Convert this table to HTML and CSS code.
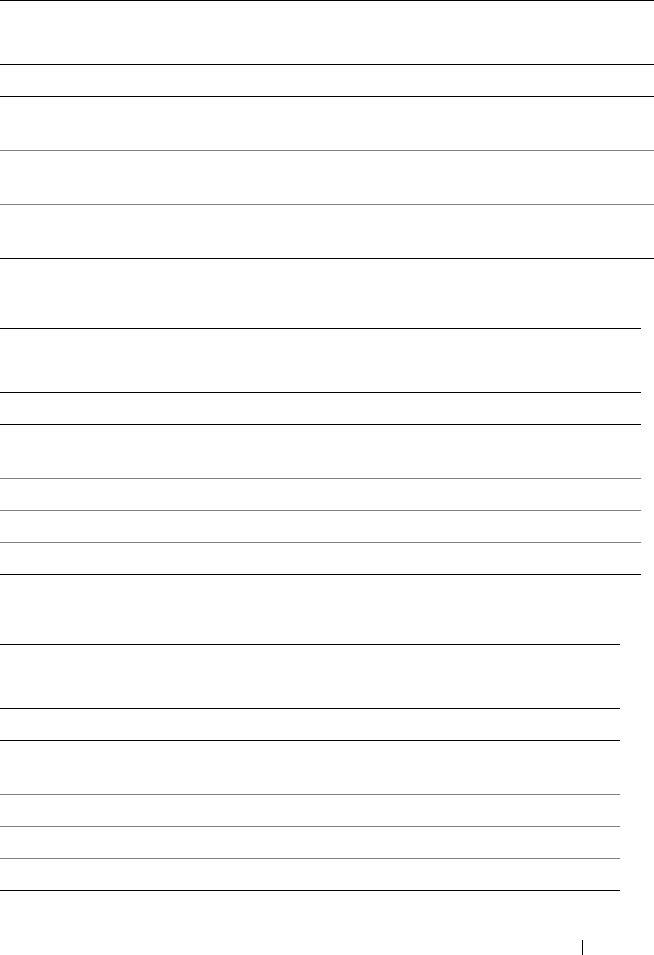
FILE: index.html
```html
<!DOCTYPE html>
<html lang="en">
<head>
<meta charset="utf-8">
<title>Tables</title>
<link rel="stylesheet" href="styles.css">
</head>
<body>
<div class="page">
  <div class="table t-full">
    <div class="row h64 dark"></div>
    <div class="row h32 dark"></div>
    <div class="row h54 dark"></div>
    <div class="row h54 light"></div>
    <div class="row h54 light"></div>
  </div>
  <div class="table t-mid">
    <div class="row h64 dark"></div>
    <div class="row h32 dark"></div>
    <div class="row h54 dark"></div>
    <div class="row h32 light"></div>
    <div class="row h32 light"></div>
    <div class="row h32 light"></div>
  </div>
  <div class="table t-narrow">
    <div class="row h64 dark"></div>
    <div class="row h32 dark"></div>
    <div class="row h54 dark"></div>
    <div class="row h32 light"></div>
    <div class="row h32 light"></div>
    <div class="row h32 light"></div>
  </div>
  <div class="footer">
    <span class="footer-bar"></span>
  </div>
</div>
</body>
</html>
```
FILE: styles.css
```css
html, body {
  margin: 0;
  padding: 0;
  background: #ffffff;
  font-family: "Liberation Sans", Arial, sans-serif;
}
.page {
  display: flex;
  flex-direction: column;
  width: 654px;
}
.table {
  display: flex;
  flex-direction: column;
  border-bottom: 1px solid #000000;
}
.t-full { width: 654px; }
.t-mid { width: 641px; margin-top: 69px; }
.t-narrow { width: 620px; margin-top: 69px; }
.row {
  box-sizing: border-box;
  border-top: 1px solid #000000;
}
.row.light { border-top-color: #808080; }
.h64 { height: 64px; }
.h32 { height: 32px; }
.h54 { height: 54px; }
.footer {
  display: flex;
  justify-content: flex-start;
  margin-top: 49px;
  padding-left: 582px;
  height: 15px;
}
.footer-bar {
  display: block;
  width: 1px;
  height: 15px;
  background: #000000;
}
```
